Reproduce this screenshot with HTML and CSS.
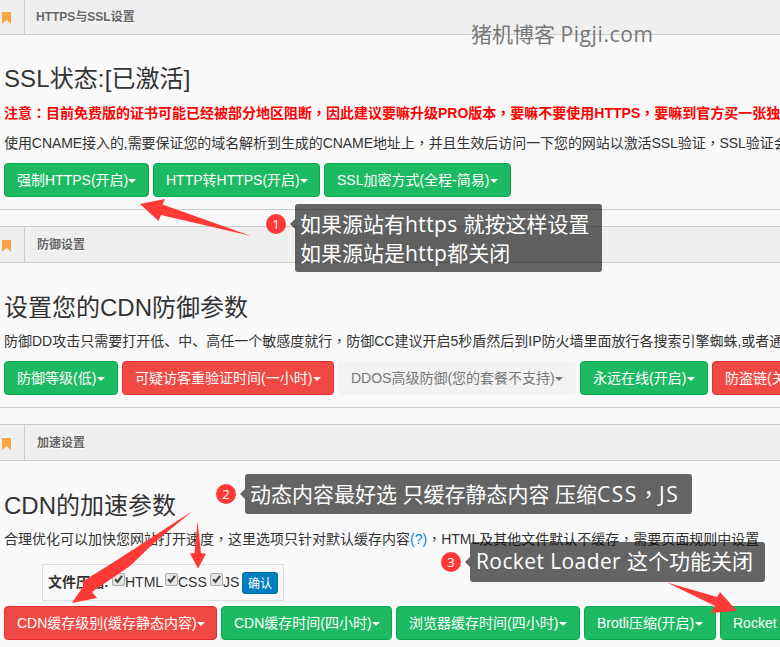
FILE: index.html
```
<!DOCTYPE html>
<html lang="zh-CN">
<head>
<meta charset="utf-8">
<title>CDN设置</title>
<link rel="stylesheet" href="styles.css">
</head>
<body>
<main class="page">
  <section class="panel panel-ssl">
    <header class="bar"><span class="mark"><svg width="9" height="12" viewBox="0 0 9 12"><path d="M0 0H9V12L4.5 8L0 12Z" fill="#faa541"/></svg></span><span class="title">HTTPS与SSL设置</span></header>
    <div class="content">
      <h1>SSL状态:[已激活]</h1>
      <p class="warning">注意<i lang="zh-TW">：</i>目前免费版的证书可能已经被部分地区阻断<i lang="zh-TW">，</i>因此建议要嘛升级PRO版本<i lang="zh-TW">，</i>要嘛不要使用HTTPS<i lang="zh-TW">，</i>要嘛到官方买一张独立</p>
      <p class="cname">使用CNAME接入的,需要保证您的域名解析到生成的CNAME地址上<i lang="zh-TW">，</i>并且生效后访问一下您的网站以激活SSL验证<i lang="zh-TW">，</i>SSL验证会</p>
      <div class="buttons">
        <button class="btn w145">强制HTTPS(开启)</button>
        <button class="btn w167">HTTP转HTTPS(开启)</button>
        <button class="btn w187">SSL加密方式(全程-简易)</button>
      </div>
    </div>
  </section>
  <section class="panel">
    <header class="bar"><span class="mark"><svg width="9" height="12" viewBox="0 0 9 12"><path d="M0 0H9V12L4.5 8L0 12Z" fill="#faa541"/></svg></span><span class="title">防御设置</span></header>
    <div class="content">
      <h1>设置您的CDN防御参数</h1>
      <p>防御DD攻击只需要打开低、中、高任一个敏感度就行<i lang="zh-TW">，</i>防御CC建议开启5秒盾然后到IP防火墙里面放行各搜索引擎蜘蛛,或者通</p>
      <div class="buttons">
        <button class="btn w114">防御等级(低)</button>
        <button class="btn red w212">可疑访客重验证时间(一小时)</button>
        <button class="btn off w238">DDOS高级防御(您的套餐不支持)</button>
        <button class="btn w128">永远在线(开启)</button>
        <button class="btn red w128">防盗链(关闭)</button>
      </div>
    </div>
  </section>
  <section class="panel last">
    <header class="bar"><span class="mark"><svg width="9" height="12" viewBox="0 0 9 12"><path d="M0 0H9V12L4.5 8L0 12Z" fill="#faa541"/></svg></span><span class="title">加速设置</span></header>
    <div class="content">
      <h1>CDN的加速参数</h1>
      <p>合理优化可以加快您网站打开速度<i lang="zh-TW">，</i>这里选项只针对默认缓存内容<a>(?)</a><i lang="zh-TW">，</i>HTML及其他文件默认不缓存<i lang="zh-TW">，</i>需要页面规则中设置</p>
      <div class="compress">
        <b>文件压缩:</b>
        <label class="c1"><svg width="13" height="13" viewBox="0 0 13 13"><rect x=".5" y=".5" width="12" height="12" rx="1.5" fill="#e6e6e6" stroke="#aaa"/><path d="M3 6.2L5.5 8.8L10 2.8" fill="none" stroke="#444" stroke-width="2.2"/></svg>HTML</label>
        <label class="c2"><svg width="13" height="13" viewBox="0 0 13 13"><rect x=".5" y=".5" width="12" height="12" rx="1.5" fill="#e6e6e6" stroke="#aaa"/><path d="M3 6.2L5.5 8.8L10 2.8" fill="none" stroke="#444" stroke-width="2.2"/></svg>CSS</label>
        <label class="c3"><svg width="13" height="13" viewBox="0 0 13 13"><rect x=".5" y=".5" width="12" height="12" rx="1.5" fill="#e6e6e6" stroke="#aaa"/><path d="M3 6.2L5.5 8.8L10 2.8" fill="none" stroke="#444" stroke-width="2.2"/></svg>JS</label>
        <button class="confirm">确认</button>
      </div>
      <div class="buttons">
        <button class="btn red w213">CDN缓存级别(缓存静态内容)</button>
        <button class="btn w171">CDN缓存时间(四小时)</button>
        <button class="btn w184">浏览器缓存时间(四小时)</button>
        <button class="btn w132">Brotli压缩(开启)</button>
        <button class="btn w180">Rocket Loader(关闭)</button>
      </div>
    </div>
  </section>

  <div class="tint"></div>
  <div class="watermark">猪机博客 <span>Pigji.com</span></div>
  <div class="badge b1">1</div>
  <div class="tip t1"><div>如果源站有<span class="latin">https </span>就按这样设置</div><div>如果源站是<span class="latin">http</span>都关闭</div></div>
  <div class="badge b2">2</div>
  <div class="tip t2"><div>动态内容最好选 只缓存静态内容 压缩<span class="caps">CSS</span><i lang="zh-TW">，</i><span class="caps">JS</span></div></div>
  <div class="badge b3">3</div>
  <div class="tip t3"><div><span class="latin">Rocket Loader </span>这个功能关闭</div></div>
  <svg class="arrows" width="780" height="647" viewBox="0 0 780 647" fill="#fe3a38">
    <path d="M140 204L165 199L162.500 204.500L251 236L161 215L158.500 221Z"/>
    <path d="M192.500 511L117 560L82 582L84 585L72 603L97 598L92 592L130 566L154 543Z"/>
    <path d="M197.500 521L201 553L206 554L198 568.500L190 553.500L194.500 553Z"/>
    <path d="M667 582.500L717 597L720 592L737 611L711 613L715 606Z"/>
  </svg>
</main>
</body>
</html>
```
FILE: styles.css
```
* { box-sizing: border-box; }
body {
  margin: 0;
  overflow: hidden;
  background: #f9f9f9;
  color: #333;
  font: 14px/20px "Liberation Sans", "Noto Sans CJK SC", sans-serif;
}
i { font-style: normal; font-family: "Noto Sans CJK TC", sans-serif; }
.page {
  position: relative;
  width: 780px;
  height: 647px;
  overflow: hidden;
  white-space: nowrap;
}
.panel { height: 182px; margin-bottom: 16px; border-bottom: 1px solid #cdcdcd; }
.panel-ssl { height: 212px; margin-top: -2px; }
.last { height: 240px; border: 0; }
.bar {
  display: flex;
  height: 37px;
  border: solid #cdcdcd;
  border-width: 1px 0;
  background: #efefef;
}
.mark {
  display: flex;
  align-items: center;
  width: 25px;
  padding: 2px 0 0 2px;
  border-right: 1px solid #cdcdcd;
}
.title {
  padding: 8px 0 0 12px;
  color: #666;
  font-size: 12px;
  font-weight: bold;
  text-shadow: 0 1px 0 #fff;
}
.panel-ssl .title { padding-left: 11px; }
.content { padding: 30px 0 0 4px; }
h1 { margin: 0 0 7px; font-size: 24px; font-weight: normal; line-height: 30px; }
p { height: 20px; margin: 0 0 11px; line-height: 20px; }
a { color: #0088cc; }
.warning { margin-bottom: 10px; color: #f00; font-weight: bold; }
.cname { letter-spacing: -.07px; }
.panel-ssl .content { padding-top: 29px; }
.panel-ssl h1 { margin-bottom: 8px; letter-spacing: .1px; }
.buttons { display: flex; gap: 4px; }
.btn {
  display: flex;
  flex: none;
  align-items: center;
  height: 34px;
  padding: 0 12px;
  border: 1px solid #08aa4c;
  border-radius: 4px;
  background: #1eb963;
  color: #fff;
  font: inherit;
  white-space: nowrap;
}
.btn::after {
  content: "";
  margin: 2px 0 0 auto;
  border: 4px solid transparent;
  border-top-color: currentColor;
  border-bottom: 0;
}
.red { border-color: #e52f2d; background: #f04944; }
.off { border-color: #f3f3f3; background: #f3f3f3; color: #777; }
.w114 { width: 114px; }
.w128 { width: 128px; }
.w132 { width: 132px; }
.w145 { width: 145px; }
.w167 { width: 167px; }
.w171 { width: 171px; }
.w180 { width: 180px; }
.w184 { width: 184px; }
.w187 { width: 187px; }
.w212 { width: 212px; }
.w213 { width: 213px; }
.w238 { width: 238px; }
.compress {
  display: flex;
  align-items: center;
  width: 242px;
  height: 37px;
  margin: 16px 0 5px 38px;
  padding-left: 5px;
  border: 1px solid #ddd;
}
.compress b { width: 64px; margin-top: -2px; }
.compress label { display: flex; margin-top: -1px; }
.compress svg { margin: 1px 0 0; }
.c1 { width: 53px; }
.c2 { width: 45px; }
.c3 { width: 32px; }
.confirm {
  width: 36px;
  height: 22px;
  margin-top: 1px;
  padding: 0;
  border: 1px solid #0070a8;
  border-radius: 3px;
  background: #0080be;
  color: #fff;
  font: 12px/18px "Noto Sans CJK SC", sans-serif;
}
.tint { position: absolute; left: 520px; top: 0; width: 260px; height: 14px; background: #edefee; }
.watermark {
  position: absolute;
  left: 471px;
  top: 19px;
  color: #777;
  font: 21px/30px "Open Sans", "Noto Sans CJK SC", sans-serif;
}
.watermark span { letter-spacing: .6px; }
.badge {
  position: absolute;
  width: 20px;
  height: 20px;
  border-radius: 50%;
  background: #fe3a38;
  color: #fff;
  font: 13px/20px "Open Sans", sans-serif;
  text-align: center;
}
.b1 { left: 266px; top: 214px; }
.b2 { left: 216px; top: 484px; }
.b3 { left: 441px; top: 552px; }
.tip {
  position: absolute;
  height: 40px;
  padding: 5px;
  border-radius: 3px;
  background: rgba(0, 0, 0, .6);
  color: #fff;
  font: 21px/29px "Open Sans", "Noto Sans CJK SC", sans-serif;
}
.tip::before {
  content: "";
  position: absolute;
  left: -5px;
  top: 15px;
  border: 5px solid transparent;
  border-right-color: rgba(0, 0, 0, .6);
  border-left: 0;
}
.latin { letter-spacing: .4px; }
.caps { letter-spacing: 1.6px; }
.t1 { left: 295px; top: 204px; width: 307px; height: 68px; padding-top: 6px; }
.t2 { left: 245px; top: 474px; width: 447px; }
.t3 { left: 470px; top: 542px; width: 295px; padding-left: 6px; }
.arrows { position: absolute; left: 0; top: 0; }
```
